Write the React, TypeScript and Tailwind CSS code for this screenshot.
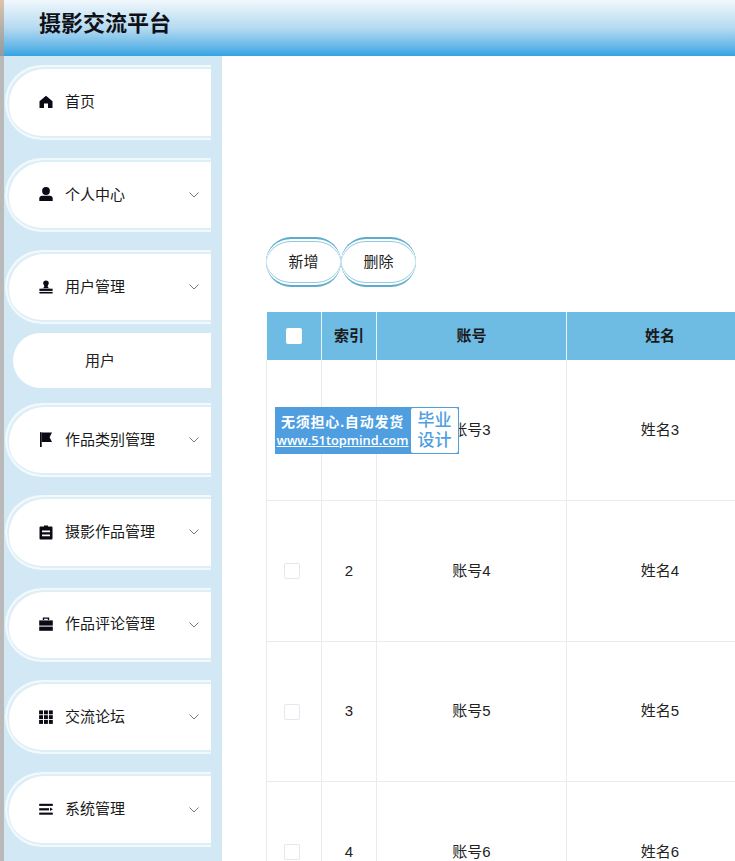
import React from "react";

const cjk = "font-['Liberation_Sans','Noto_Sans_CJK_SC',sans-serif]";

function Chevron() {
  return (
    <svg width="10" height="6" viewBox="0 0 10 6" fill="none" stroke="#555" strokeWidth="0.8" className="mr-[12px] ml-auto shrink-0">
      <path d="M0.5 0.5 L5 5 L9.5 0.5" />
    </svg>
  );
}

const icons: Record<string, React.ReactNode> = {
  home: <path d="M7 0.8 L13.5 6.2 V13 H9 V8.6 H5 V13 H0.5 V6.2 Z" />,
  user: (
    <>
      <circle cx="7" cy="4" r="3.9" />
      <path d="M0.3 14 V11.4 C0.3 9.8 1.6 8.8 3.2 8.8 H10.8 C12.4 8.8 13.7 9.8 13.7 11.4 V14 Z" />
    </>
  ),
  stamp: (
    <>
      <path d="M7 0.5 C5.2 0.5 4.2 1.7 4.2 3.1 C4.2 4.4 5.3 5.2 5.3 6.4 C5.3 7.2 4.4 7.8 3.2 8.2 H10.8 C9.6 7.8 8.7 7.2 8.7 6.4 C8.7 5.2 9.8 4.4 9.8 3.1 C9.8 1.7 8.8 0.5 7 0.5 Z" />
      <rect x="0.4" y="8.7" width="13.2" height="2.2" />
      <rect x="0.4" y="11.9" width="13.2" height="1.6" />
    </>
  ),
  flag: (
    <>
      <rect x="1" y="0.2" width="1.7" height="14.8" />
      <path d="M2.7 0.6 H13 L10.6 5.2 L13 10 H2.7 Z" />
    </>
  ),
  clip: (
    <path
      fillRule="evenodd"
      d="M4 1.6 H5 V0.4 H9 V1.6 H12.6 C13.1 1.6 13.5 2 13.5 2.5 V13.5 C13.5 14 13.1 14.4 12.6 14.4 H1.4 C0.9 14.4 0.5 14 0.5 13.5 V2.5 C0.5 2 0.9 1.6 1.4 1.6 H4 Z M3 5.4 V7.2 H11 V5.4 Z M3 9.4 V11.2 H11 V9.4 Z"
    />
  ),
  case: (
    <>
      <path d="M3.8 3 V0.4 H10.2 V3 H8.8 V1.7 H5.2 V3 Z" />
      <path d="M0.2 3.4 H13.8 V8.6 H0.2 Z" />
      <path d="M0.2 9.6 H13.8 V13.8 H0.2 Z" />
    </>
  ),
  grid: (
    <>
      {[0, 1, 2].flatMap((r) =>
        [0, 1, 2].map((c) => <rect key={`${r}${c}`} x={0.1 + c * 4.9} y={0.4 + r * 4.8} width="3.9" height="3.9" />)
      )}
    </>
  ),
  list: (
    <>
      <rect x="0.2" y="1.8" width="13.6" height="2.1" />
      <rect x="0.2" y="6.2" width="9.8" height="2.2" />
      <path d="M11 5.6 L13.9 7.3 L11 9 Z" />
      <rect x="0.2" y="10.6" width="13.6" height="2.1" />
    </>
  ),
};

function Icon({ name }: { name: string }) {
  return (
    <svg width="14" height="15" viewBox="0 0 14 15" fill="#0a0a14" className="mr-[12px] shrink-0">
      {icons[name]}
    </svg>
  );
}

function NavItem({ icon, label, arrow = true, mb = "mb-[18px]" }: { icon: string; label: string; arrow?: boolean; mb?: string }) {
  return (
    <div className={`h-[74.4px] rounded-l-[37px] border-y-[2px] border-l-[2px] border-[#f1f9fc] bg-white shadow-[inset_2px_2px_0_#deeef6,inset_0_-2px_0_#deeef6] flex items-center pl-[32px] ml-[1px] mr-[11px] shrink-0 ${mb}`}>
      <Icon name={icon} />
      <span className="text-[15px] text-[#1a1a1a]">{label}</span>
      {arrow && <Chevron />}
    </div>
  );
}

function HeadCell({ w, children, last }: { w: string; children: React.ReactNode; last?: boolean }) {
  return (
    <div className={`${w} shrink-0 h-full flex items-center justify-center text-[15px] font-bold text-[#1a1a1a] ${last ? "" : "border-r border-[#e6f3f9]"}`}>
      {children}
    </div>
  );
}

function Row({ h, index, account, name }: { h: string; index: string; account: string; name: string }) {
  return (
    <div className={`${h} flex border-b border-[#e8ebf0] text-[15px] text-[#222] shrink-0`}>
      <div className="w-[56px] shrink-0 flex items-center border-l border-r border-[#e8ebf0] pl-[17px]">
        <div className="w-[16px] h-[16px] rounded-[2px] border border-[#e4e7ed] bg-white" />
      </div>
      <div className="w-[55px] shrink-0 flex items-center justify-center border-r border-[#e8ebf0]">{index}</div>
      <div className="w-[190px] shrink-0 flex items-center justify-center border-r border-[#e8ebf0]">{account}</div>
      <div className="w-[186px] shrink-0 flex items-center justify-center">{name}</div>
    </div>
  );
}

function PillButton({ children }: { children: React.ReactNode }) {
  return (
    <div className="w-[75px] h-[50px] rounded-[25px] bg-white border-y-[2px] border-[#5eaccb] flex items-center justify-center shadow-[inset_0_2px_0_#fff,inset_0_3px_0_#8ecbe0,inset_0_-2px_0_#fff,inset_0_-3px_0_#8ecbe0] text-[15px] text-[#222]">
      {children}
    </div>
  );
}

export default function App() {
  return (
    <div className={`w-[735px] h-[861px] overflow-hidden bg-white flex flex-col ${cjk}`}>
      <div className="h-[56px] shrink-0 pl-[4px] bg-gradient-to-b from-[#dcc4aa] to-[#8f9aa5]">
        <header className="h-full bg-gradient-to-b from-[#f1f8fc] via-[#b5daf0] to-[#2fa5e3] flex items-center pl-[35px]">
          <h1 className="text-[22px] font-bold text-[#101018] leading-none -mt-[8px]">摄影交流平台</h1>
        </header>
      </div>
      <div className="flex flex-1 min-h-0">
        <aside className="w-[222px] shrink-0 border-l-[4px] border-[#b9b9b9] bg-[#d2e9f5] pt-[9.3px] flex flex-col overflow-hidden">
          <NavItem icon="home" label="首页" arrow={false} />
          <NavItem icon="user" label="个人中心" />
          <NavItem icon="stamp" label="用户管理" mb="mb-[9px]" />
          <div className="h-[55px] mb-[14.3px] ml-[9px] mr-[11px] rounded-l-[28px] bg-white flex items-center pl-[72px] text-[15px] text-[#222] shrink-0">
            用户
          </div>
          <NavItem icon="flag" label="作品类别管理" />
          <NavItem icon="clip" label="摄影作品管理" />
          <NavItem icon="case" label="作品评论管理" />
          <NavItem icon="grid" label="交流论坛" />
          <NavItem icon="list" label="系统管理" />
        </aside>
        <main className="flex-1 min-w-0 bg-white pl-[44px] pt-[181px] overflow-hidden flex flex-col">
          <div className="flex shrink-0">
            <PillButton>新增</PillButton>
            <PillButton>删除</PillButton>
          </div>
          <div className="mt-[25px] w-[487px] flex flex-col shrink-0">
            <div className="h-[48px] ml-[1px] bg-[#6ebbe4] flex shrink-0">
              <HeadCell w="w-[55px]">
                <div className="w-[16px] h-[16px] rounded-[2px] bg-white" />
              </HeadCell>
              <HeadCell w="w-[55px]">索引</HeadCell>
              <HeadCell w="w-[190px]">账号</HeadCell>
              <HeadCell w="w-[186px]" last>姓名</HeadCell>
            </div>
            <Row h="h-[141px]" index="1" account="账号3" name="姓名3" />
            <Row h="h-[141px]" index="2" account="账号4" name="姓名4" />
            <Row h="h-[140px]" index="3" account="账号5" name="姓名5" />
            <Row h="h-[141px]" index="4" account="账号6" name="姓名6" />
          </div>
        </main>
      </div>
      <div className="fixed left-[275px] top-[407px] w-[184px] h-[47px] bg-[#4f9fe0] flex items-center">
        <div className="w-[135px] text-white flex flex-col items-center">
          <div className="text-[14px] font-semibold leading-[20px] tracking-[0.8px] whitespace-nowrap">无须担心.自动发货</div>
          <div className="text-[12.8px] font-semibold leading-[17px] underline whitespace-nowrap font-['Open_Sans',sans-serif]">www.51topmind.com</div>
        </div>
        <div className="ml-auto mr-[1px] w-[47px] h-[45px] bg-white rounded-[2px] text-[#4f9fe0] text-[17px] font-medium leading-[20px] flex items-center justify-center text-center">
          毕业<br />设计
        </div>
      </div>
    </div>
  );
}
